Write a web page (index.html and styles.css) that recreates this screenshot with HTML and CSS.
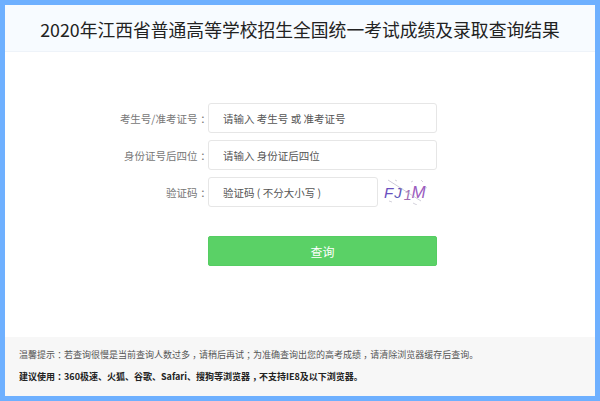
FILE: index.html
```html
<!DOCTYPE html>
<html lang="zh-CN">
<head>
<meta charset="utf-8">
<title>2020年江西省普通高等学校招生全国统一考试成绩及录取查询结果</title>
<link rel="stylesheet" href="styles.css">
</head>
<body>
<div class="panel">
  <header class="head"><h1 class="title">2020年江西省普通高等学校招生全国统一考试成绩及录取查询结果</h1></header>
  <main class="form">
    <div class="row">
      <label class="label">考生号/准考证号<span class="p">：</span></label>
      <input class="field" placeholder="请输入 考生号 或 准考证号">
    </div>
    <div class="row">
      <label class="label">身份证号后四位<span class="p">：</span></label>
      <input class="field" placeholder="请输入 身份证后四位">
    </div>
    <div class="row">
      <label class="label">验证码<span class="p">：</span></label>
      <input class="field short" placeholder="验证码 ( 不分大小写 )">
      <div class="captcha">
        <svg class="noise" viewBox="0 0 44 26" width="44" height="26"><path d="M3 1 L36 22" stroke="#b9b4c8" stroke-width=".7" fill="none"/><path d="M10 1 L12 2 M26 3 L28 2 M36 1 L38 3 M4 22 L7 23 M28 24 L32 26 M40 8 L42 9" stroke="#c9c6d3" stroke-width=".8" fill="none"/></svg>
        <span class="c1">F</span><span class="c2">J</span><span class="c3">1</span><span class="c4">M</span>
      </div>
    </div>
    <div class="row action">
      <span class="label"></span>
      <button class="submit" type="button">查询</button>
    </div>
  </main>
  <footer class="notes">
    <p class="note">温馨提示<span class="p">：</span>若查询很慢是当前查询人数过多<span class="p">，</span>请稍后再试<span class="p">；</span>为准确查询出您的高考成绩<span class="p">，</span>请清除浏览器缓存后查询。</p>
    <p class="note strong">建议使用<span class="p">：</span>360极速、火狐、谷歌、Safari、搜狗等浏览器<span class="p">，</span>不支持IE8及以下浏览器。</p>
  </footer>
</div>
</body>
</html>
```
FILE: styles.css
```css
* { box-sizing: border-box; }
html, body { margin: 0; height: 401px; overflow: hidden; }
body {
  padding: 5px;
  background: #6eb0ff;
  font-family: "Noto Sans CJK SC", "Noto Sans", sans-serif;
}
.panel {
  height: 391px;
  background: #fff;
  display: flex;
  flex-direction: column;
}
.head {
  height: 47px;
  padding-top: 1px;
  background: #f7fbff;
  border-bottom: 1px solid #eef3f9;
  display: flex;
  align-items: center;
  justify-content: center;
}
.title {
  margin: 0;
  font-size: 17.8px;
  font-weight: 400;
  color: #222;
  white-space: nowrap;
}
.form {
  padding-top: 51px;
  display: flex;
  flex-direction: column;
  gap: 7px;
}
.row {
  display: flex;
  align-items: center;
  height: 30px;
}
.label {
  width: 203px;
  flex: none;
  text-align: right;
  font-size: 10.5px;
  color: #777;
  white-space: nowrap;
}
.p {
  font-feature-settings: "halt";
  margin: 0 .25em;
}
.field {
  width: 229px;
  height: 30px;
  padding: 0 14px;
  border: 1px solid #e6e6e6;
  border-radius: 3px;
  background: #fff;
  font: 10.5px "Noto Sans CJK SC", sans-serif;
  color: #555;
  outline: none;
}
.field::placeholder { color: #555; opacity: 1; }
.field.short { width: 170px; }
.captcha {
  position: relative;
  width: 47px;
  height: 26px;
  margin-left: 5px;
  display: flex;
  align-items: center;
  font: italic 15px "Liberation Sans", sans-serif;
}
.noise { position: absolute; left: 2px; top: 0; }
.c1 { color: #6a4fc0; margin-left: 1px; }
.c2 { color: #5a55b8; margin-left: 1px; }
.c3 { color: #a06ab0; font-size: 14px; margin: 6px 0 0 2px; }
.c4 { color: #9a5cc0; font-size: 17px; margin-top: 2px; }
.action { margin-top: 22px; }
.submit {
  width: 229px;
  height: 30px;
  border: 1px solid #55cd62;
  border-radius: 2px;
  background: #5ad166;
  color: #fff;
  font: 12px "Noto Sans CJK SC", sans-serif;
  padding: 0;
}
.notes {
  margin-top: auto;
  height: 59px;
  background: #f7f7f7;
  padding: 11px 14px 0;
  display: flex;
  flex-direction: column;
  gap: 8px;
}
.note {
  margin: 0;
  font-size: 9px;
  line-height: 14px;
  color: #555;
  white-space: nowrap;
}
.note.strong { color: #222; font-weight: 700; }
```
